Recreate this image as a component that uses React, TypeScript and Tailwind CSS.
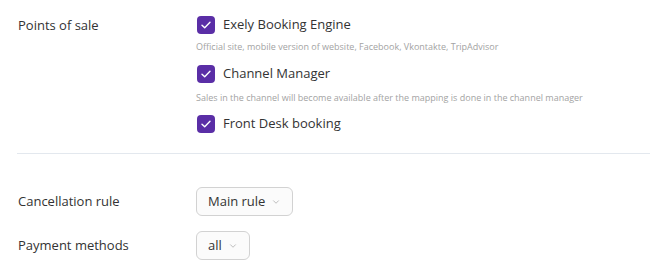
import { ChevronDown } from 'lucide-react';

function Check({ label }: { label: string }) {
  return (
    <label className="flex items-center h-[20px]">
      <span className="ml-[1px] w-[18px] h-[18px] rounded-[4px] bg-[#5a2ea6] flex items-center justify-center">
        <svg width="10" height="8" viewBox="0 0 10 8" fill="none">
          <path d="M1 4.2 3.7 6.8 9 1.2" stroke="#fff" strokeWidth="1.4" strokeLinecap="round" strokeLinejoin="round" />
        </svg>
      </span>
      <span className="ml-[8px] text-[13px] text-[#333]">{label}</span>
    </label>
  );
}

function Select({ value }: { value: string }) {
  return (
    <button className="h-[29px] px-[11px] flex items-center gap-[6px] border border-[#d2d2d2] rounded-[6px] bg-[#fbfbfb] text-[13px] text-[#333]">
      <span>{value}</span>
      <ChevronDown size={10} strokeWidth={1.5} className="text-[#999] mt-[1px]" />
    </button>
  );
}

export default function App() {
  return (
    <div className="w-[650px] h-[275px] bg-white overflow-hidden" style={{ fontFamily: "'Open Sans', sans-serif" }}>
      {/* Points of sale */}
      <div className="flex pl-[18px] pt-[15px] pb-[19px]">
        <div className="w-[178px] text-[13px] text-[#333] leading-[20px]">Points of sale</div>
        <div className="flex flex-col">
          <Check label="Exely Booking Engine" />
          <div className="text-[9px] text-[#a3a3a3] mt-[6px] mb-[11px] leading-[12px]">
            Official site, mobile version of website, Facebook, Vkontakte, TripAdvisor
          </div>
          <Check label="Channel Manager" />
          <div className="text-[9px] text-[#a3a3a3] mt-[8px] mb-[10px] leading-[12px]">
            Sales in the channel will become available after the mapping is done in the channel manager
          </div>
          <Check label="Front Desk booking" />
        </div>
      </div>

      <div className="ml-[17px] border-t border-[#e3e8ee]" />

      {/* Settings */}
      <div className="pl-[18px] pt-[33px] flex flex-col gap-[15px]">
        <div className="flex items-center">
          <div className="w-[178px] text-[13px] text-[#333]">Cancellation rule</div>
          <Select value="Main rule" />
        </div>
        <div className="flex items-center">
          <div className="w-[178px] text-[13px] text-[#333]">Payment methods</div>
          <Select value="all" />
        </div>
      </div>
    </div>
  );
}
